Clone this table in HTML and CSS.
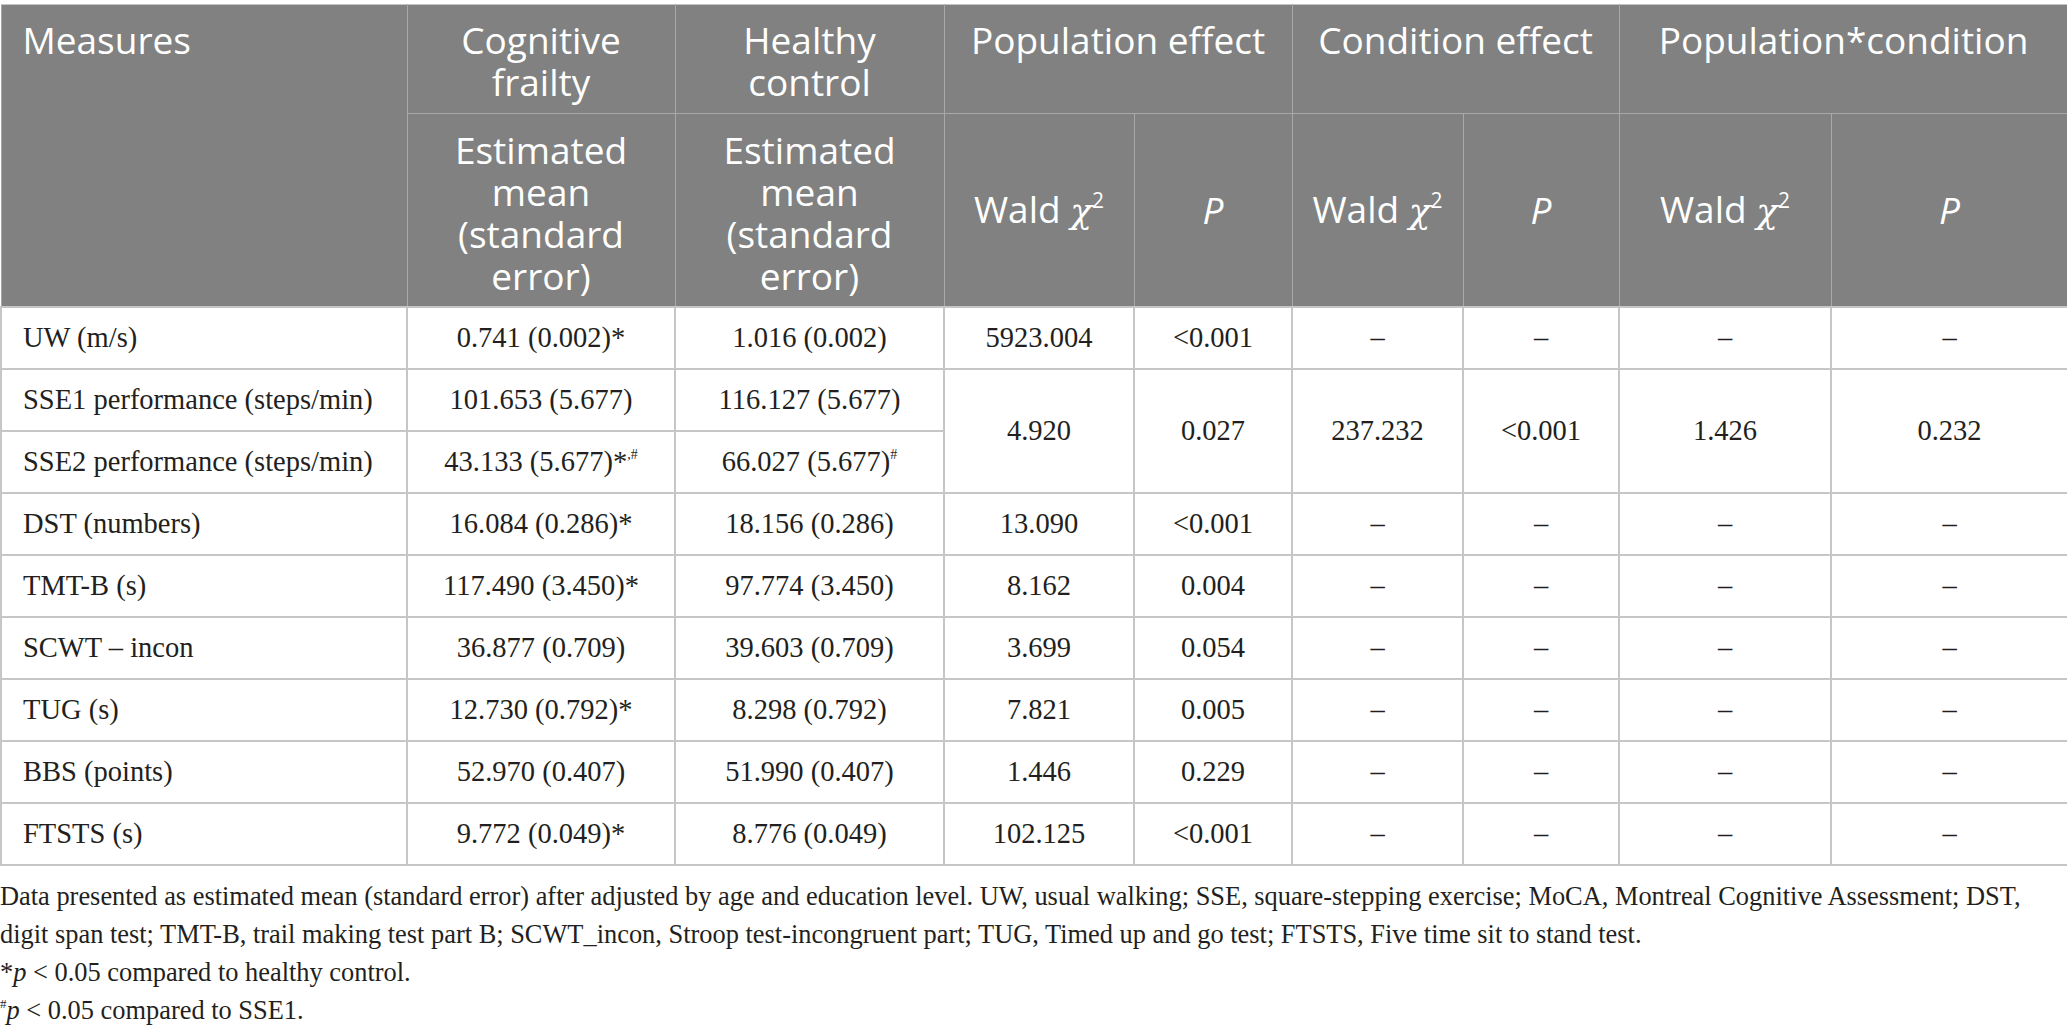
FILE: index.html
```html
<!DOCTYPE html>
<html>
<head>
<meta charset="utf-8">
<link rel="stylesheet" href="styles.css">
</head>
<body>
<table class="tbl">
  <colgroup>
    <col class="c1"><col class="c2"><col class="c3"><col class="c4"><col class="c5"><col class="c6"><col class="c7"><col class="c8"><col class="c9">
  </colgroup>
  <thead>
    <tr class="h1">
      <th rowspan="2" class="first">Measures</th>
      <th class="grp">Cognitive frailty</th>
      <th class="grp">Healthy control</th>
      <th colspan="2">Population effect</th>
      <th colspan="2">Condition effect</th>
      <th colspan="2">Population*condition</th>
    </tr>
    <tr class="h2">
      <th class="em">Estimated mean (standard error)</th>
      <th class="em">Estimated mean (standard error)</th>
      <th>Wald <span class="chi">χ<sup>2</sup></span></th>
      <th><i>P</i></th>
      <th>Wald <span class="chi">χ<sup>2</sup></span></th>
      <th><i>P</i></th>
      <th>Wald <span class="chi">χ<sup>2</sup></span></th>
      <th><i>P</i></th>
    </tr>
  </thead>
  <tbody>
    <tr><td class="first">UW (m/s)</td><td>0.741 (0.002)*</td><td>1.016 (0.002)</td><td>5923.004</td><td>&lt;0.001</td><td>–</td><td>–</td><td>–</td><td>–</td></tr>
    <tr><td class="first">SSE1 performance (steps/min)</td><td>101.653 (5.677)</td><td>116.127 (5.677)</td><td rowspan="2">4.920</td><td rowspan="2">0.027</td><td rowspan="2">237.232</td><td rowspan="2">&lt;0.001</td><td rowspan="2">1.426</td><td rowspan="2">0.232</td></tr>
    <tr><td class="first">SSE2 performance (steps/min)</td><td>43.133 (5.677)*<sup class="fn">,#</sup></td><td>66.027 (5.677)<sup class="fn">#</sup></td></tr>
    <tr><td class="first">DST (numbers)</td><td>16.084 (0.286)*</td><td>18.156 (0.286)</td><td>13.090</td><td>&lt;0.001</td><td>–</td><td>–</td><td>–</td><td>–</td></tr>
    <tr><td class="first">TMT-B (s)</td><td>117.490 (3.450)*</td><td>97.774 (3.450)</td><td>8.162</td><td>0.004</td><td>–</td><td>–</td><td>–</td><td>–</td></tr>
    <tr><td class="first">SCWT – incon</td><td>36.877 (0.709)</td><td>39.603 (0.709)</td><td>3.699</td><td>0.054</td><td>–</td><td>–</td><td>–</td><td>–</td></tr>
    <tr><td class="first">TUG (s)</td><td>12.730 (0.792)*</td><td>8.298 (0.792)</td><td>7.821</td><td>0.005</td><td>–</td><td>–</td><td>–</td><td>–</td></tr>
    <tr><td class="first">BBS (points)</td><td>52.970 (0.407)</td><td>51.990 (0.407)</td><td>1.446</td><td>0.229</td><td>–</td><td>–</td><td>–</td><td>–</td></tr>
    <tr><td class="first">FTSTS (s)</td><td>9.772 (0.049)*</td><td>8.776 (0.049)</td><td>102.125</td><td>&lt;0.001</td><td>–</td><td>–</td><td>–</td><td>–</td></tr>
  </tbody>
</table>
<div class="notes">
  <p>Data presented as estimated mean (standard error) after adjusted by age and education level. UW, usual walking; SSE, square-stepping exercise; MoCA, Montreal Cognitive Assessment; DST, digit span test; TMT-B, trail making test part B; SCWT_incon, Stroop test-incongruent part; TUG, Timed up and go test; FTSTS, Five time sit to stand test.</p>
  <p>*<i>p</i> &lt; 0.05 compared to healthy control.</p>
  <p><sup class="fn">#</sup><i>p</i> &lt; 0.05 compared to SSE1.</p>
</div>
</body>
</html>
```
FILE: styles.css
```css
html, body {
  margin: 0;
  padding: 0;
  background: #ffffff;
}
body {
  padding-top: 4px;
}
.tbl {
  width: 2067px;
  border-collapse: collapse;
  table-layout: fixed;
  color: #231f20;
}
.c1 { width: 406px; }
.c2 { width: 268px; }
.c3 { width: 269px; }
.c4 { width: 190px; }
.c5 { width: 158px; }
.c6 { width: 171px; }
.c7 { width: 156px; }
.c8 { width: 212px; }
.c9 { width: 237px; }

.tbl thead th {
  background: #808180;
  color: #ffffff;
  font-family: "Open Sans", "Noto Sans", sans-serif;
  font-weight: 400;
  font-size: 37px;
  line-height: 42px;
  border: 1px solid #a8a8a8;
  padding: 0 10px;
  text-align: center;
  box-sizing: border-box;
}
.tbl thead tr.h1 th {
  border-top-color: #c4c4c4;
  height: 109px;
  vertical-align: top;
  padding-top: 14px;
}
.tbl thead tr.h1 th.grp {
  padding-left: 40px;
  padding-right: 40px;
}
.tbl thead tr.h2 th {
  height: 193px;
  vertical-align: middle;
}
.tbl thead tr.h2 th.em {
  padding-top: 6px;
}
.tbl thead th.first {
  text-align: left;
  padding-left: 21px;
}
.chi {
  font-family: "DejaVu Serif", "Liberation Serif", serif;
  font-style: italic;
  font-size: 36px;
}
.chi sup {
  font-family: "Open Sans", sans-serif;
  font-style: normal;
  font-size: 21px;
  vertical-align: 15px;
  line-height: 0;
}
.tbl td {
  font-family: "Liberation Serif", "Times New Roman", serif;
  font-size: 28.5px;
  height: 62px;
  box-sizing: border-box;
  border: 2px solid #c6c6c6;
  text-align: center;
  vertical-align: middle;
  padding: 0 8px;
}
.tbl td.first {
  text-align: left;
  padding-left: 21px;
}
sup.fn {
  font-size: 14px;
  vertical-align: 12px;
  line-height: 0;
}
.notes {
  margin-top: 11px;
  font-family: "Liberation Serif", "Times New Roman", serif;
  font-size: 26.4px;
  line-height: 38px;
  color: #231f20;
}
.notes p {
  margin: 0;
  line-height: 38px;
}
.notes sup.fn {
  font-size: 13px;
  vertical-align: 11px;
}
```
